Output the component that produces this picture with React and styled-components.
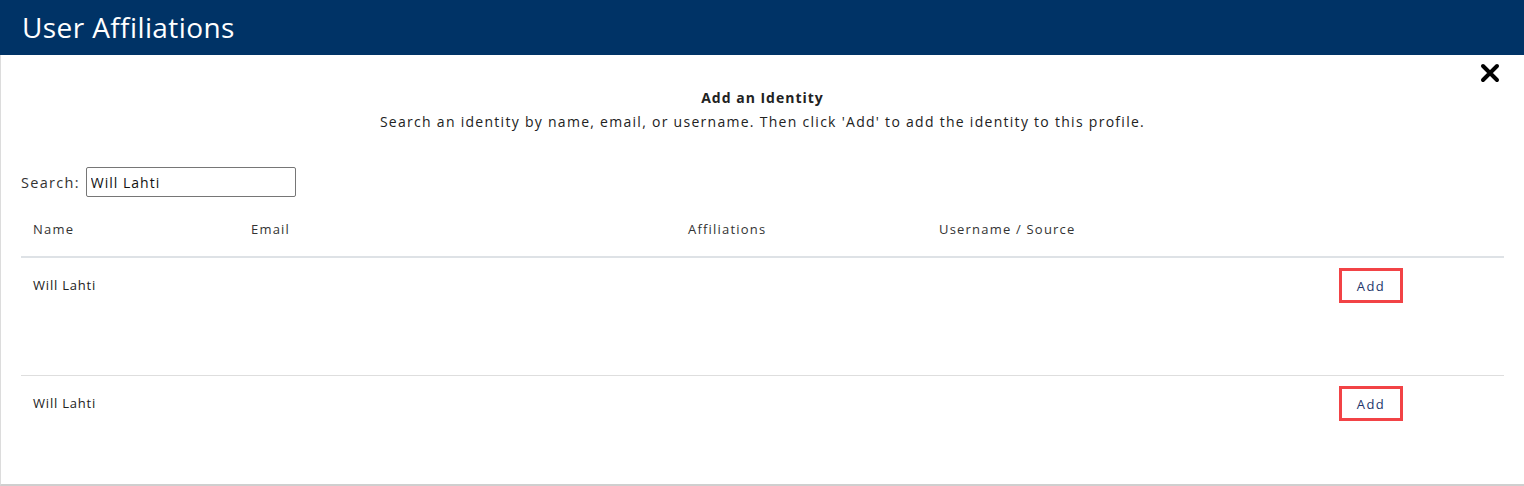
import React from "react";
import styled, { createGlobalStyle } from "styled-components";

const Global = createGlobalStyle`
  html, body { margin: 0; padding: 0; background: #fff; }
  body { font-family: "Open Sans", "DejaVu Sans", sans-serif; color: #212529; }
  * { box-sizing: border-box; }
`;

const Panel = styled.div`
  width: 1524px;
  height: 486px;
  display: flex;
  flex-direction: column;
  background: #fff;
`;

const Header = styled.div`
  height: 55px;
  background: #003366;
  color: #fff;
  display: flex;
  align-items: center;
  padding: 0 0 2px 22px;
  font-size: 28px;
  letter-spacing: 0.4px;
  font-weight: 400;
`;

const Body = styled.div`
  flex: 1;
  position: relative;
  border-left: 1px solid #dcdcdc;
  border-bottom: 2px solid #cfcfcf;
  padding: 31px 20px 0 20px;
  display: flex;
  flex-direction: column;
`;

const Close = styled.button`
  position: absolute;
  top: 8px;
  right: 24px;
  border: 0;
  background: none;
  padding: 0;
  width: 20px;
  height: 20px;
  cursor: pointer;
`;

const Intro = styled.div`
  text-align: center;
  font-size: 14px;
  line-height: 24px;
  letter-spacing: 1.28px;
  color: #222;
`;

const IntroTitle = styled.div`
  font-weight: 700;
  letter-spacing: 1px;
`;

const SearchRow = styled.label`
  display: flex;
  align-items: center;
  gap: 6px;
  margin-top: 33px;
  font-size: 14.5px;
  letter-spacing: 1.3px;
  color: #333;
`;

const SearchInput = styled.input`
  width: 210px;
  height: 30px;
  border: 1px solid #767676;
  border-radius: 2px;
  padding: 0 4px;
  font: inherit;
  font-size: 14px;
  letter-spacing: 1px;
  color: #111;
`;

const Table = styled.div`
  margin-top: 13px;
  width: 1483px;
`;

const Row = styled.div`
  display: grid;
  grid-template-columns: 218px 437px 251px 399px 1fr;
  align-items: start;
  height: ${(p) => p.$h}px;
  border-bottom: ${(p) => p.$line || "none"};
`;

const HeadCell = styled.div`
  padding: 10px 12px 0;
  font-size: 13px;
  letter-spacing: 1.2px;
  color: #333;
`;

const Cell = styled.div`
  padding: 18px 12px 0;
  font-size: 13px;
  letter-spacing: 0.8px;
  color: #222;
`;

const ActionCell = styled.div`
  padding: 10px 0 0 13px;
`;

const AddButton = styled.button`
  width: 64px;
  height: 35px;
  border: 3px solid #f24346;
  background: #fff;
  color: #23356b;
  font: inherit;
  font-size: 13px;
  letter-spacing: 1.4px;
  padding: 0;
  cursor: pointer;
`;

const rows = [
  { name: "Will Lahti", h: 118, line: "1px solid #dedede" },
  { name: "Will Lahti", h: 107 },
];

export default function App() {
  return (
    <>
      <Global />
      <Panel>
        <Header>User Affiliations</Header>
        <Body>
          <Close aria-label="Close">
            <svg width="20" height="20" viewBox="0 0 20 20">
              <path d="M3 3 L17 17 M17 3 L3 17" stroke="#000" strokeWidth="4" strokeLinecap="round" />
            </svg>
          </Close>
          <Intro>
            <IntroTitle>Add an Identity</IntroTitle>
            <div>Search an identity by name, email, or username. Then click 'Add' to add the identity to this profile.</div>
          </Intro>
          <SearchRow>
            Search:
            <SearchInput defaultValue="Will Lahti" />
          </SearchRow>
          <Table>
            <Row $h={48} $line="2px solid #dee2e6">
              <HeadCell>Name</HeadCell>
              <HeadCell>Email</HeadCell>
              <HeadCell>Affiliations</HeadCell>
              <HeadCell>Username / Source</HeadCell>
              <HeadCell />
            </Row>
            {rows.map((r, i) => (
              <Row key={i} $h={r.h} $line={r.line}>
                <Cell>{r.name}</Cell>
                <Cell />
                <Cell />
                <Cell />
                <ActionCell>
                  <AddButton>Add</AddButton>
                </ActionCell>
              </Row>
            ))}
          </Table>
        </Body>
      </Panel>
    </>
  );
}
